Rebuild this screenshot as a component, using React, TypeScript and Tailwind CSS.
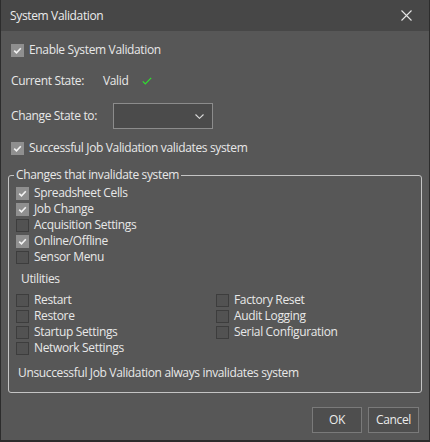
import React from "react";

type CheckProps = {
  label: string;
  checked?: boolean;
};

function CheckBox({ label, checked }: CheckProps) {
  return (
    <div className="flex h-4 items-center gap-[5px]">
      {checked ? (
        <span className="flex h-[13px] w-[13px] items-center justify-center bg-[#8f8f8f]">
          <svg width="9" height="9" viewBox="0 0 9 9" fill="none">
            <path d="M1.2 4.6 L3.5 6.8 L7.8 2.2" stroke="#f2f2f2" strokeWidth="1.6" />
          </svg>
        </span>
      ) : (
        <span className="h-[13px] w-[13px] border border-[#3d3d3d] bg-[#525252]" />
      )}
      <span>{label}</span>
    </div>
  );
}

export default function App() {
  const changes = [
    { label: "Spreadsheet Cells", checked: true },
    { label: "Job Change", checked: true },
    { label: "Acquisition Settings", checked: false },
    { label: "Online/Offline", checked: true },
    { label: "Sensor Menu", checked: false },
  ];

  const utilities = [
    "Restart",
    "Factory Reset",
    "Restore",
    "Audit Logging",
    "Startup Settings",
    "Serial Configuration",
    "Network Settings",
  ];

  return (
    <div
      className="flex h-[442px] w-[430px] flex-col border-x border-b-2 border-[#2c2c2c] bg-[#575757] text-[12px] tracking-[-0.35px] text-[#e8e8e8]"
      style={{ fontFamily: "'Open Sans', 'Noto Sans', sans-serif" }}
    >
      {/* Title bar */}
      <div className="flex h-[31px] shrink-0 items-center justify-between bg-[#474747] pl-[9px] pr-[17px]">
        <span className="text-[#ececec]">System Validation</span>
        <svg width="11" height="11" viewBox="0 0 11 11" fill="none">
          <path d="M0.5 0.5 L10.5 10.5 M10.5 0.5 L0.5 10.5" stroke="#e6e6e6" strokeWidth="1.1" />
        </svg>
      </div>

      <div className="flex flex-1 flex-col px-[10px]">
        <div className="mt-[11px]">
          <CheckBox label="Enable System Validation" checked />
        </div>

        <div className="mt-[15px] flex h-4 items-center">
          <span className="w-[92px]">Current State:</span>
          <span>Valid</span>
          <svg className="ml-[14px]" width="10" height="8" viewBox="0 0 10 8" fill="none">
            <path d="M0.8 4.3 L3.3 6.9 L9.2 0.8" stroke="#2fe02f" strokeWidth="1.2" />
          </svg>
        </div>

        <div className="mt-[14px] flex items-center">
          <span className="w-[102px]">Change State to:</span>
          <div className="flex h-[26px] w-[100px] items-center justify-end border border-[#8c8c8c] bg-[#4b4b4b] pr-[8px]">
            <svg width="9" height="5" viewBox="0 0 9 5" fill="none">
              <path d="M0.5 0.5 L4.5 4.3 L8.5 0.5" stroke="#dcdcdc" strokeWidth="1.1" />
            </svg>
          </div>
        </div>

        <div className="mt-[11px]">
          <CheckBox label="Successful Job Validation validates system" checked />
        </div>

        {/* Group box */}
        <fieldset className="mx-[-3px] mt-[11px] rounded-[3px] border border-[#c4c4c4] pb-[11px] pl-[7px] pr-[7px]">
          <legend className="-ml-[2px] px-[2px] leading-4">Changes that invalidate system</legend>
          <div className="mt-[2px] flex flex-col">
            {changes.map((c) => (
              <CheckBox key={c.label} label={c.label} checked={c.checked} />
            ))}
          </div>

          <div className="mt-[6px] flex h-4 items-center pl-[5px]">Utilities</div>

          <div className="mt-[5px] grid grid-cols-[200px_1fr]">
            {utilities.map((u) => (
              <CheckBox key={u} label={u} />
            ))}
          </div>

          <div className="mt-[9px] flex h-4 items-center pl-[2px]">
            Unsuccessful Job Validation always invalidates system
          </div>
        </fieldset>

        <div className="mt-[14px] flex justify-end gap-[6px]">
          <button className="h-[26px] w-[50px] border border-[#7a7a7a] bg-[#4e4e4e] text-[#ececec]">OK</button>
          <button className="h-[26px] w-[51px] border border-[#7a7a7a] bg-[#4e4e4e] text-[#ececec]">Cancel</button>
        </div>
      </div>
    </div>
  );
}
